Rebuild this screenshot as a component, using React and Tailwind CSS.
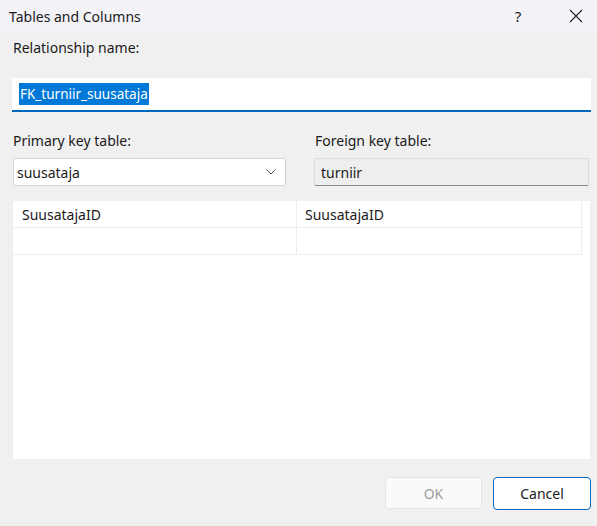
import { useState } from "react";

export default function App() {
    const [name] = useState("FK_turniir_suusataja");
    const rows = [
        { pk: "SuusatajaID", fk: "SuusatajaID" },
        { pk: "", fk: "" },
    ];

    return (
        <div
            className="w-[597px] h-[526px] bg-[#f0f0f0] text-[#1a1a1a] flex flex-col overflow-hidden"
            style={{ fontFamily: '"Noto Sans", "Open Sans", sans-serif' }}
        >
            {/* TITLE BAR */}
            <div className="h-[32px] bg-[#f3f2f7] flex items-center pl-[9px]">
                <span className="text-[14px] flex-1">Tables and Columns</span>
                <span className="text-[15px] w-[14px] mr-[44px] text-center">?</span>
                <svg width="14" height="14" viewBox="0 0 14 14" className="mr-[14px]">
                    <path d="M1 1L13 13M13 1L1 13" stroke="#222" strokeWidth="1.1" />
                </svg>
            </div>

            {/* BODY */}
            <div className="flex-1 pl-[12px] pr-[6px] pt-[6px] flex flex-col">
                <label className="text-[14px] leading-[20px] ml-[1px]">Relationship name:</label>
                <div className="mt-[20px] h-[34px] bg-white border-b-2 border-[#0067c0] flex items-center pl-[7px]">
                    <span className="bg-[#0078d7] text-white text-[13.5px] leading-[22px] px-[1px]">{name}</span>
                </div>

                <div className="flex mt-[16px]">
                    <div className="w-[273px] ml-[1px]">
                        <label className="text-[14px] leading-[20px]">Primary key table:</label>
                        <div className="mt-[6px] h-[28px] bg-white border border-[#d4d4d4] rounded-[2px] flex items-center pl-[3px] pr-[9px]">
                            <span className="flex-1 text-[14px]">suusataja</span>
                            <svg width="10" height="6" viewBox="0 0 10 6">
                                <path d="M0.5 0.5L5 5L9.5 0.5" stroke="#555" fill="none" strokeWidth="1" />
                            </svg>
                        </div>
                    </div>
                    <div className="w-[275px] ml-[28px]">
                        <label className="text-[14px] leading-[20px] ml-[1px]">Foreign key table:</label>
                        <div className="mt-[6px] h-[28px] bg-[#eeeeee] border border-[#dcdcdc] border-b-[#8a8a8a] rounded-[2px] flex items-center pl-[6px]">
                            <span className="text-[14px]">turniir</span>
                        </div>
                    </div>
                </div>

                {/* GRID */}
                <div className="mt-[15px] ml-[1px] w-[577px] h-[258px] bg-white">
                    <div className="w-[569px]">
                        {rows.map((r, i) => (
                            <div key={i} className="flex h-[27px] border-b border-[#ececec]">
                                <div className="w-[284px] border-r border-[#ececec] pl-[9px] flex items-center text-[14px]">
                                    {r.pk}
                                </div>
                                <div className="flex-1 border-r border-[#ececec] pl-[8px] flex items-center text-[14px]">
                                    {r.fk}
                                </div>
                            </div>
                        ))}
                    </div>
                </div>

                {/* BUTTONS */}
                <div className="flex justify-end mt-[18px] gap-[11px]">
                    <button className="w-[97px] h-[32px] bg-[#fafafa] border border-[#e5e5e5] rounded-[4px] text-[14px] text-[#9d9d9d]">
                        OK
                    </button>
                    <button className="w-[98px] h-[33px] bg-white border border-[#0067c0] rounded-[4px] text-[14px] text-[#1a1a1a]">
                        Cancel
                    </button>
                </div>
            </div>
        </div>
    );
}
